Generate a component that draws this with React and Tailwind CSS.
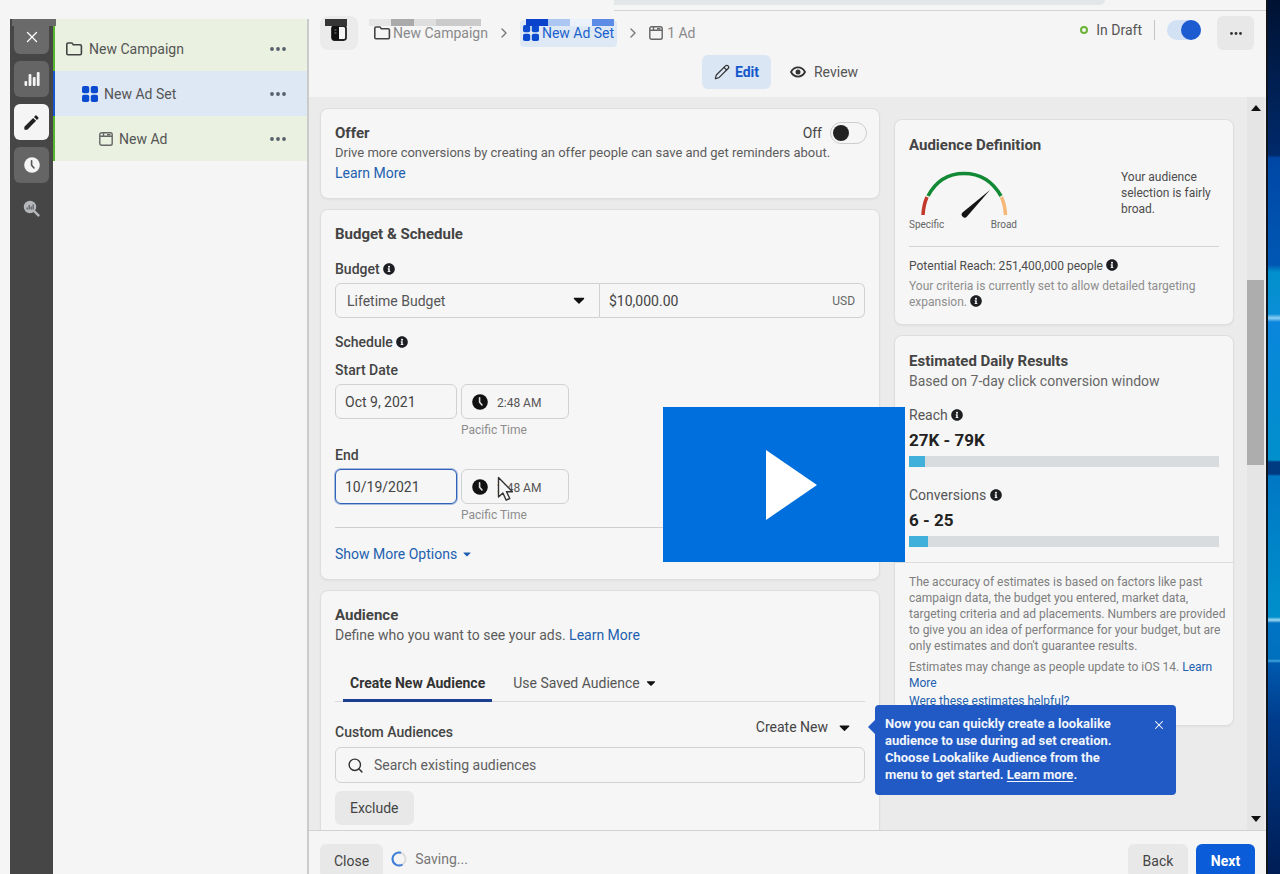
import React from "react";
import { FaInfoCircle, FaCaretDown } from "react-icons/fa";
import { MdEdit } from "react-icons/md";
import { X, ChevronRight, Pencil, Search } from "lucide-react";

const Info = () => (
  <FaInfoCircle className="inline-block size-3 shrink-0 align-[-1px] text-[#1c1e21]" aria-hidden="true" />
);

const FolderIcon = () => (
  <svg viewBox="0 0 18 16" className="h-4 w-[18px] shrink-0" fill="none" stroke="#444" strokeWidth="1.6" strokeLinejoin="round" aria-hidden="true">
    <path d="M1.8 3.2c0-.8.5-1.2 1.2-1.2h3.6c.5 0 .8.2 1 .6l.7 1.2h6.9c.7 0 1.2.5 1.2 1.2v7.4c0 .8-.5 1.3-1.2 1.3H3c-.7 0-1.2-.5-1.2-1.3z" />
  </svg>
);

const GridIcon = () => (
  <svg viewBox="0 0 16 16" className="size-4 shrink-0" fill="#0b4bd0" aria-hidden="true">
    <rect x="0" y="0" width="7.2" height="7.2" rx="1.8" />
    <rect x="8.8" y="0" width="7.2" height="7.2" rx="1.8" />
    <rect x="0" y="8.8" width="7.2" height="7.2" rx="1.8" />
    <rect x="8.8" y="8.8" width="7.2" height="7.2" rx="1.8" />
  </svg>
);

const AdIcon = () => (
  <svg viewBox="0 0 14 14" className="size-[14px] shrink-0" fill="none" stroke="#666" strokeWidth="1.4" aria-hidden="true">
    <rect x="0.8" y="0.8" width="12.4" height="12.4" rx="1.8" />
    <path d="M1 4.2h12M4.5 1v3M8 2.6h3.4" />
  </svg>
);

const ClockIcon = ({ face, hand }) => (
  <svg viewBox="0 0 16 16" className="size-4 shrink-0" aria-hidden="true">
    <circle cx="8" cy="8" r="7.8" fill={face} />
    <path d="M7.6 3.8v4.4l2.4 2.8" fill="none" stroke={hand} strokeWidth="1.6" strokeLinecap="round" />
  </svg>
);

const Dots = ({ className }) => (
  <svg viewBox="0 0 16 4" className={className} fill="currentColor" aria-hidden="true">
    <circle cx="2" cy="2" r="1.9" />
    <circle cx="8" cy="2" r="1.9" />
    <circle cx="14" cy="2" r="1.9" />
  </svg>
);

const railButton = "flex h-9 w-[35px] items-center justify-center rounded-md";

function Rail() {
  return (
    <nav aria-label="Tools" className="relative flex w-[43px] shrink-0 flex-col items-center gap-[7px] bg-[#464646]">
      <i className="absolute top-0 left-[2px] h-[7px] w-[44px] bg-[#6a6a6a]" aria-hidden="true" />
      <button aria-label="Close editor" className="relative flex h-[35px] w-[35px] items-center justify-center rounded-b-md bg-[#6a6a6a] text-white">
        <X className="size-[18px]" strokeWidth={1.7} />
      </button>
      <button aria-label="Charts" className={`${railButton} bg-[#656565]`}>
        <svg viewBox="0 0 16 16" className="size-4" fill="#f4f4f4">
          <rect x="0.5" y="10" width="2.6" height="5" rx="1" />
          <rect x="4.6" y="3" width="2.8" height="12" rx="1" />
          <rect x="8.8" y="6" width="2.8" height="9" rx="1" />
          <rect x="12.8" y="1" width="2.8" height="14" rx="1" />
        </svg>
      </button>
      <button aria-label="Edit" className={`${railButton} bg-[#f5f5f5] text-[#222]`}>
        <MdEdit className="size-[19px]" />
      </button>
      <button aria-label="History" className={`${railButton} bg-[#656565]`}>
        <ClockIcon face="#f5f5f5" hand="#555" />
      </button>
      <button aria-label="Inspect" className={railButton}>
        <svg viewBox="0 0 17 17" className="size-[17px]">
          <circle cx="7" cy="7" r="6.2" fill="#b5b7bb" />
          <path d="M11.4 11.4l4 4" stroke="#b5b7bb" strokeWidth="2.4" strokeLinecap="round" />
          <path d="M4.2 9.4V7.4M6.2 9.4V5M8.2 9.4V6.4M10.1 9.4V4.6" stroke="#55585e" strokeWidth="1.2" />
        </svg>
      </button>
    </nav>
  );
}

function TreeRow({ icon, label, className }) {
  return (
    <li className={`flex h-[45px] items-center border-l-2 pr-[21px] ${className}`}>
      {icon}
      <a href="#" className="ml-[6px] flex-1">{label}</a>
      <button aria-label={`${label} options`} className="text-[#56606b]">
        <Dots className="h-1 w-4" />
      </button>
    </li>
  );
}

function Header() {
  return (
    <header className="relative flex h-[97px] shrink-0 flex-col">
      <div className="ml-[305px] h-[11px] border-b border-[#d4d4d4]">
        <div className="mr-[161px] h-[5px] rounded-br-lg bg-[#e2e8e9]" />
      </div>
      <div className="flex h-[44px] items-center justify-between pr-3 pl-[11px]">
        <div className="flex items-center text-sm text-[#8a8a8a]">
          <button aria-label="Toggle sidebar" className="flex h-[34px] w-[38px] items-center justify-center rounded-lg bg-[#ebebeb]">
            <svg viewBox="0 0 16 16" className="size-4">
              <rect x="1" y="1" width="14" height="14" rx="2.4" fill="#f5f5f5" stroke="#222" strokeWidth="1.8" />
              <path d="M3 1h5v14H3a2 2 0 0 1-2-2V3a2 2 0 0 1 2-2z" fill="#111" />
              <path d="M3.4 5h2M3.4 8h2" stroke="#888" />
            </svg>
          </button>
          <a href="#" className="ml-[15px] flex items-center gap-[2px]"><FolderIcon />New Campaign</a>
          <ChevronRight className="mx-2 size-4 text-[#777]" />
          <a href="#" className="flex h-[27px] items-center gap-[3px] rounded bg-[#dfe9f6] px-[3px] text-[#1b62cc]"><GridIcon />New Ad Set</a>
          <ChevronRight className="mx-2 size-4 text-[#777]" />
          <a href="#" className="flex items-center gap-1"><AdIcon />1 Ad</a>
        </div>
        <div className="flex items-center">
          <div className="flex items-center pb-[7px]">
            <span className="size-2 rounded-full border-2 border-[#6cb33a]" />
            <span className="ml-2 text-sm text-[#555]">In Draft</span>
            <span className="mx-3 h-5 border-l border-[#c4c4c4]" />
            <input
              type="checkbox"
              role="switch"
              defaultChecked
              aria-label="Ad set on"
              className="flex h-5 w-[34px] appearance-none justify-end rounded-full bg-[#d3e1f5] before:size-5 before:rounded-full before:bg-[#1d5bd0]"
            />
          </div>
          <button aria-label="More" className="ml-4 flex h-[34px] w-[37px] items-center justify-center rounded-md bg-[#e8e8e8] text-[#333]">
            <Dots className="h-[3px] w-3" />
          </button>
        </div>
      </div>
      <div className="flex h-[34px] items-center justify-center pl-1 text-sm">
        <button className="flex h-[34px] items-center gap-[5px] rounded-md bg-[#dae6f3] px-3 font-bold text-[#1458cc]">
          <Pencil className="size-4 text-[#333]" strokeWidth={1.8} />Edit
        </button>
        <button className="flex h-[34px] items-center gap-2 px-[19px] text-[#555]">
          <svg viewBox="0 0 16 12" className="h-3 w-4">
            <path d="M1 6c1.6-3 4-4.600 7-4.600S13.400 3 15 6c-1.600 3-4 4.600-7 4.600S2.600 9 1 6z" fill="none" stroke="#333" strokeWidth="1.800" />
            <circle cx="8" cy="6" r="2.500" fill="#333" />
          </svg>
          Review
        </button>
      </div>
      <div className="absolute top-[19px] left-4 flex h-[7px]" aria-hidden="true">
        <i className="w-[22px] bg-[#353535]" />
        <i className="w-[22px]" />
        <i className="w-[22px] bg-[#e6e6e6]" />
        <i className="w-[23px] bg-[#aaa]" />
        <i className="w-[22px] bg-[#dedede]" />
        <i className="w-[45px] bg-[#cbcbcb]" />
        <i className="w-[45px]" />
        <i className="w-[22px] bg-[#0a42cc]" />
        <i className="w-[22px] bg-[#abc7f2]" />
        <i className="w-[22px] bg-[#eaf1fa]" />
        <i className="w-[22px] bg-[#5c8ce6]" />
      </div>
    </header>
  );
}

const card = "rounded-lg border border-[#dedede] bg-[#f6f6f6] shadow-xs";
const heading = "text-[15px] leading-5 font-bold text-[#444]";
const label = "block text-sm leading-5 font-medium text-[#444]";
const box = "h-[35px] rounded-md border border-[#cfd1d3] bg-[#f6f6f6] text-sm text-[#444]";

function DateRow({ id, title, value, focus, children }) {
  return (
    <div>
      <label htmlFor={id} className={label}>{title}</label>
      <div className="mt-1 flex gap-1">
        <input
          id={id}
          defaultValue={value}
          className={`h-[35px] w-[122px] rounded-md border bg-[#f6f6f6] px-[9px] text-sm text-[#444] ${focus ? "border-[#2f62b8] ring-1 ring-[#2f62b8]/40" : "border-[#cfd1d3]"}`}
        />
        <div>
          <div className={`${box} relative flex w-[108px] items-center gap-[9px] px-[10px]`}>
            <ClockIcon face="#111" hand="#ddd" />
            <input aria-label={`${title} time`} defaultValue="2:48 AM" className="w-full min-w-0 pt-[2px] text-xs text-[#555]" />
            {children}
          </div>
          <p className="mt-[3px] text-xs leading-4 text-[#8d8d8d]">Pacific Time</p>
        </div>
      </div>
    </div>
  );
}

function OfferCard() {
  return (
    <section className={`${card} pt-[14px] pr-3 pb-[15px] pl-[14px]`}>
      <div className="flex h-5 items-center justify-between">
        <h2 className={heading}>Offer</h2>
        <label className="flex items-center gap-2 text-sm text-[#444]">
          Off
          <input
            type="checkbox"
            role="switch"
            className="flex h-[22px] w-[37px] appearance-none items-center rounded-full border border-[#cdcdcd] px-[2px] before:size-4 before:rounded-full before:bg-[#222]"
          />
        </label>
      </div>
      <p className="text-[13px] leading-5 text-[#5c5c5c]">
        Drive more conversions by creating an offer people can save and get reminders about.
      </p>
      <a href="#" className="block text-sm leading-5 text-[#2160ae]">Learn More</a>
    </section>
  );
}

function BudgetCard() {
  return (
    <section className={`${card} px-[14px] pt-[14px] pb-[15px]`}>
      <h2 className={heading}>Budget &amp; Schedule</h2>
      <label htmlFor="budget" className={`${label} mt-[15px]`}>Budget <Info /></label>
      <div className="mt-1 grid grid-cols-2">
        <div className="relative">
          <select id="budget" className="h-[35px] w-full appearance-none rounded-l-md border border-[#cfd1d3] px-[11px] text-sm text-[#555]">
            <option>Lifetime Budget</option>
          </select>
          <FaCaretDown className="pointer-events-none absolute top-2 right-3 size-[18px] text-[#111]" />
        </div>
        <div className="flex h-[35px] items-center rounded-r-md border border-l-0 border-[#cfd1d3] px-[9px]">
          <input aria-label="Budget amount" defaultValue="$10,000.00" className="w-full min-w-0 text-sm text-[#444]" />
          <span className="text-xs text-[#666]">USD</span>
        </div>
      </div>
      <h3 className={`${label} mt-[14px] mb-2`}>Schedule <Info /></h3>
      <DateRow id="start" title="Start Date" value="Oct 9, 2021" />
      <div className="h-[7px]" />
      <DateRow id="end" title="End" value="10/19/2021" focus>
        <svg viewBox="0 0 17 26" className="absolute top-[6px] left-[35px] h-[26px] w-[17px]" aria-hidden="true">
          <path d="M1.500 1.500v19.500l4.400-4 3.300 7.200 3.600-1.700-3.300-6.800h6z" fill="#f6f6f6" stroke="#333" strokeWidth="1.400" strokeLinejoin="round" />
        </svg>
      </DateRow>
      <hr className="mt-1 mb-4 border-[#cfcfcf]" />
      <button className="flex items-center gap-1 text-sm leading-5 text-[#2160ae]">
        Show More Options <FaCaretDown className="size-3" />
      </button>
    </section>
  );
}

function AudienceCard() {
  return (
    <section className={`${card} p-[14px]`}>
      <h2 className={heading}>Audience</h2>
      <p className="text-sm leading-5 text-[#5c5c5c]">
        Define who you want to see your ads. <a href="#" className="text-[#2160ae]">Learn More</a>
      </p>
      <div role="tablist" className="mt-[22px] flex gap-[13px] border-b border-[#d8dadc] px-2 text-sm">
        <button role="tab" aria-selected="true" className="-mb-px h-[35px] border-b-[3px] border-[#1d3f91] px-[7px] font-bold text-[#333]">
          Create New Audience
        </button>
        <button role="tab" aria-selected="false" className="flex h-8 items-center gap-1 px-2 text-[#555]">
          Use Saved Audience <FaCaretDown className="size-[14px] text-[#111]" />
        </button>
      </div>
      <div className="relative mt-[15px] flex h-[30px] justify-between">
        <label htmlFor="search" className="pt-[5px] text-sm leading-5 font-medium text-[#444]">Custom Audiences</label>
        <button className="mr-3 flex h-5 items-center gap-2 text-sm text-[#444]">
          Create New <FaCaretDown className="size-[17px] text-[#111]" />
        </button>
        <div role="dialog" aria-label="Lookalike audience tip" className="absolute -top-3 left-full z-10 ml-[10px] flex h-[90px] w-[301px] items-start rounded-sm bg-[#215ac4] p-[10px]">
          <svg viewBox="0 0 7 14" className="absolute top-[15px] -left-[7px] h-[14px] w-[7px]" fill="#215ac4" aria-hidden="true"><path d="M7 0L0 7l7 7z" /></svg>
          <p className="w-[242px] text-[13px] leading-[17px] font-bold text-[#f1f5fc]">
            Now you can quickly create a lookalike audience to use during ad set creation. Choose Lookalike Audience from the menu to get started. <a href="#" className="underline underline-offset-2">Learn more</a>.
          </p>
          <button aria-label="Dismiss" className="ml-auto pt-[3px] text-white"><X className="size-[14px]" strokeWidth={1.8} /></button>
        </div>
      </div>
      <div className="flex h-9 items-center gap-[10px] rounded-md border border-[#cfd1d3] px-[11px]">
        <Search className="size-[17px] shrink-0 text-[#333]" />
        <input id="search" placeholder="Search existing audiences" className="w-full text-sm placeholder:text-[#5e5e5e]" />
      </div>
      <button className="mt-2 h-[34px] rounded-md bg-[#e8e8e8] px-[15px] text-sm text-[#444]">Exclude</button>
    </section>
  );
}

function DefinitionCard() {
  return (
    <section className={`${card} px-[14px] pt-[15px] pb-[14px]`}>
      <h2 className={heading}>Audience Definition</h2>
      <div className="flex justify-between pt-[14px]">
        <div className="w-[108px]">
          <svg viewBox="0 0 108 50" className="h-[50px] w-[108px]" fill="none" strokeWidth="3.500" role="img" aria-label="Audience gauge, fairly broad">
            <path d="M14 46Q14.500 36 18 28" stroke="#c0392b" />
            <path d="M19 27Q31 4.500 55 4.500T92 27" stroke="#128a35" />
            <path d="M92.500 28Q96 36 96.500 46" stroke="#f6b777" />
            <path d="M81 21L58 47.500a3 3 0 0 1-4.500-4z" fill="#151515" stroke="none" />
          </svg>
          <div className="flex justify-between text-[10px] leading-3 text-[#666]">
            <span>Specific</span>
            <span>Broad</span>
          </div>
        </div>
        <p className="w-[98px] text-xs leading-4 text-[#4c4c4c]">Your audience selection is fairly broad.</p>
      </div>
      <hr className="mt-[15px] mb-[9px] border-[#d4d4d4]" />
      <p className="text-xs leading-5 text-[#4c4c4c]">Potential Reach: 251,400,000 people <Info /></p>
      <p className="mt-[2px] text-xs leading-4 text-[#8d8d8d]">
        Your criteria is currently set to allow detailed targeting expansion. <Info />
      </p>
    </section>
  );
}

function Metric({ name, value, share }) {
  return (
    <div>
      <h3 className="text-sm leading-5 text-[#555]">{name} <Info /></h3>
      <p className="mt-[3px] text-[17px] leading-6 font-bold text-[#222]">{value}</p>
      <div className="mt-1 h-[11px] bg-[#d9dcde]">
        <div className="h-full bg-[#41b0da]" style={{ width: `${share}%` }} />
      </div>
    </div>
  );
}

function ResultsCard() {
  return (
    <section className={card}>
      <div className="flex flex-col px-[14px] py-[15px]">
        <h2 className={heading}>Estimated Daily Results</h2>
        <p className="mb-[14px] text-sm leading-5 text-[#666]">Based on 7-day click conversion window</p>
        <div className="flex flex-col gap-[18px]">
          <Metric name="Reach" value="27K - 79K" share={5} />
          <Metric name="Conversions" value="6 - 25" share={6} />
        </div>
      </div>
      <div className="border-t border-[#dcdcdc] pt-[11px] pr-1 pb-4 pl-[14px] text-xs leading-4 text-[#7e7e7e]">
        <p>
          The accuracy of estimates is based on factors like past campaign data, the budget you entered, market data, targeting criteria and ad placements. Numbers are provided to give you an idea of performance for your budget, but are only estimates and don't guarantee results.
        </p>
        <p className="mt-[5px]">Estimates may change as people update to iOS 14. <a href="#" className="text-[#2160ae]">Learn More</a></p>
        <a href="#" className="mt-[2px] block text-[#2160ae]">Were these estimates helpful?</a>
      </div>
    </section>
  );
}

function Scrollbar() {
  return (
    <div className="mr-[2px] flex w-[17px] shrink-0 flex-col items-center bg-[#e5e5e5]" aria-hidden="true">
      <svg viewBox="0 0 10 6" className="mt-2 h-[6px] w-[10px]" fill="#111"><path d="M0 6l5-6 5 6z" /></svg>
      <div className="mt-[169px] h-[185px] w-full bg-[#adadad]" />
      <svg viewBox="0 0 10 6" className="mt-auto mb-2 h-[6px] w-[10px]" fill="#111"><path d="M0 0l5 6 5-6z" /></svg>
    </div>
  );
}

export default function App() {
  return (
    <div className="relative flex h-screen overflow-hidden bg-[#f5f5f5] font-['Roboto',sans-serif]">
      <div className="flex min-w-0 flex-1 border-r-2 border-[#10141c]">
        <div className="flex pt-[19px] pl-[10px]">
          <Rail />
          <aside className="w-[256px] border-r-2 border-[#cbcbcb]">
            <ul className="bg-[#eaf1e0] pt-[7px] text-sm text-[#555]">
              <TreeRow icon={<FolderIcon />} label="New Campaign" className="border-[#56b52c] pl-[10px]" />
              <TreeRow icon={<GridIcon />} label="New Ad Set" className="border-[#1458cc] bg-[#dde8f4] pl-[27px]" />
              <TreeRow icon={<AdIcon />} label="New Ad" className="border-[#56b52c] pl-11" />
            </ul>
          </aside>
        </div>
        <main className="flex min-w-0 flex-1 flex-col">
          <Header />
          <div className="flex min-h-0 flex-1 overflow-hidden bg-[#ebebeb]">
            <div className="flex min-w-0 flex-1 items-start gap-[14px] pr-[13px] pl-[11px]">
              <div className="flex min-w-0 flex-1 flex-col gap-[10px] pt-[11px]">
                <OfferCard />
                <BudgetCard />
                <AudienceCard />
              </div>
              <div className="flex w-[340px] shrink-0 flex-col gap-[10px] pt-[22px]">
                <DefinitionCard />
                <ResultsCard />
              </div>
            </div>
            <Scrollbar />
          </div>
          <footer className="flex h-[44px] shrink-0 items-start border-t border-[#d2d2d2] pt-[13px] pr-[11px] pl-[11px] text-sm">
            <button className="h-[34px] shrink-0 rounded-md bg-[#e8e8e8] px-[14px] text-[#444]">Close</button>
            <div role="status" className="ml-2 flex h-[30px] items-center gap-2 text-[#777]">
              <svg viewBox="0 0 16 16" className="size-4" fill="none" strokeWidth="2">
                <circle cx="8" cy="8" r="6.500" stroke="#dcdcdc" />
                <path d="M11.500 13.500A6.500 6.500 0 1 1 10 1.800" stroke="#3d7fd6" />
              </svg>
              Saving...
            </div>
            <button className="ml-auto h-[34px] w-[60px] rounded-md bg-[#e8e8e8] text-[#444]">Back</button>
            <button className="ml-2 h-[34px] w-[59px] rounded-md bg-[#0b5cd8] font-bold text-white">Next</button>
          </footer>
        </main>
      </div>
      <div
        aria-hidden="true"
        className="w-3 shrink-0 bg-[linear-gradient(#001233_0px,#002a6b_155px,#0047a5_158px,#0058b4_265px,#0090cc_272px,#0a8fd6_314px,#8fd0f2_318px,#0a86dc_322px,#0090cc_460px,#003a80_462px,#003a80_474px,#0078c4_476px,#0090cc_617px,#9fd8f2_620px,#0074c4_623px,#0070bc_659px,#3fa4dc_661px,#005aae_663px,#003c8c_720px,#001d55_874px)]"
      />
      <button aria-label="Play video" className="absolute top-[407px] left-[663px] z-20 flex h-[155px] w-[242px] items-center justify-center bg-[#006fde]">
        <svg viewBox="0 0 52 70" className="ml-4 h-[70px] w-[52px]" fill="#fff"><path d="M0 0l51 35L0 70z" /></svg>
      </button>
    </div>
  );
}
